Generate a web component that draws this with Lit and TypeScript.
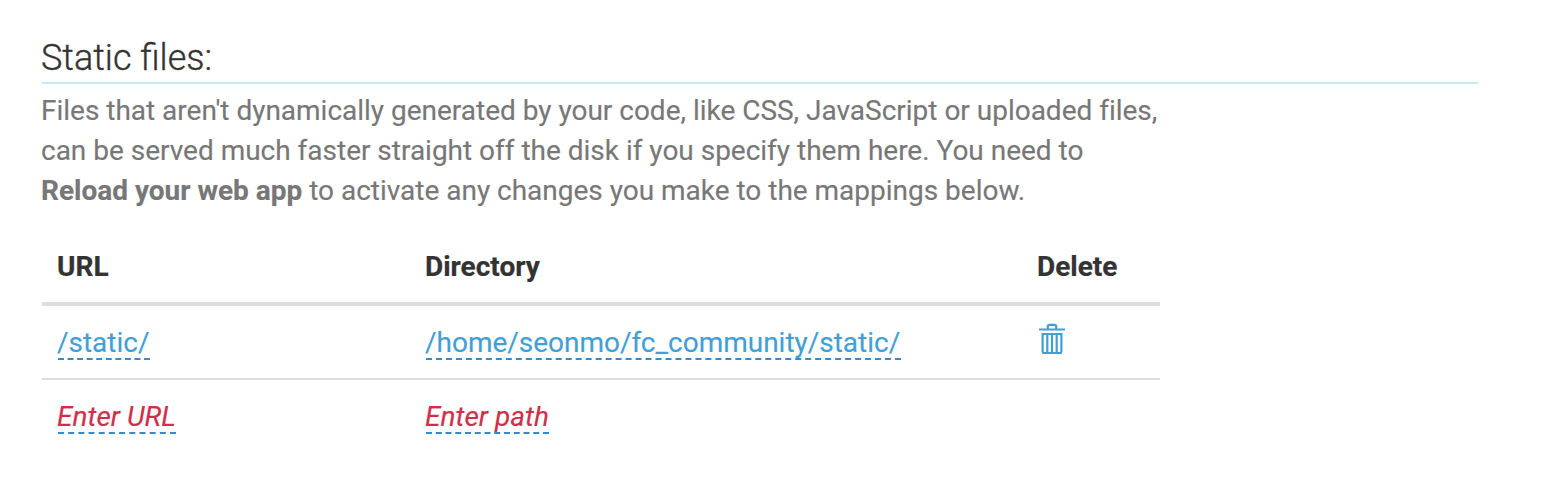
import { LitElement, html, css } from "lit";
import { customElement } from "lit/decorators.js";

@customElement("app-root")
export class AppRoot extends LitElement {
  static styles = css`
    :host { display: block; box-sizing: border-box; height: 480px; padding: 34px 82px 0 42px; background: #fff; color: #333; font: 28px/40px Roboto, sans-serif; overflow: hidden; }
    h2 { margin: 0; height: 48px; font-size: 36px; line-height: 48px; font-weight: 300; text-indent: -1px; border-bottom: 2px solid #c5e9fb; white-space: nowrap; -webkit-text-stroke: 0.35px; }
    p { margin: 7px 0 0 -1px; color: #777; white-space: nowrap; letter-spacing: -0.012px; -webkit-text-stroke: 0.15px; }
    table { width: 1118px; margin-top: 19px; border-collapse: separate; border-spacing: 0; table-layout: fixed; }
    th, td { text-align: left; padding: 0 16px; box-sizing: border-box; vertical-align: top; white-space: nowrap; }
    th { height: 76px; padding-top: 17px; border-bottom: 4px solid #ddd; font-weight: 700; text-indent: -1px; -webkit-text-stroke: 0.2px; }
    td { height: 74px; padding-top: 16px; }
    .saved td { border-bottom: 2px solid #ddd; }
    .url { width: 368px; }
    .dir { width: 612px; }
    a { display: inline-block; height: 36px; padding-right: 0.4px; line-height: 42px; color: #429fd6; text-indent: -1px; letter-spacing: -0.02px; text-decoration: none; border-bottom: 2px dashed #368ac9; -webkit-text-stroke: 0.15px; }
    .empty { color: #d02e4b; letter-spacing: 0.02px; font-style: italic; }
    svg { display: block; margin-left: 1px; }
  `;
  render() {
    return html`
      <h2>Static files:</h2>
      <p>Files that aren't dynamically generated by your code, like CSS, JavaScript or uploaded files,<br>can be served much faster straight off the disk if you specify them here. You need to<br><b>Reload your web app</b> to activate any changes you make to the mappings below.</p>
      <table>
        <thead><tr><th class="url">URL</th><th class="dir">Directory</th><th>Delete</th></tr></thead>
        <tbody>
          <tr class="saved"><td><a>/static/</a></td><td><a>/home/seonmo/fc_community/static/</a></td>
            <td><svg width="28" height="34" viewBox="0 0 28 34" fill="none" stroke="#429fd6" stroke-width="2.2"><path d="M0 7.5h26M8.8 7V4.5Q8.8 2.8 10.5 2.8h5Q17.2 2.8 17.2 4.5V7M3.6 12h18.8v17.2Q22.4 31 20.6 31H5.4Q3.6 31 3.6 29.2zM8.3 12v19M13 12v19M17.7 12v19"/></svg></td></tr>
          <tr><td><a class="empty">Enter URL</a></td><td><a class="empty">Enter path</a></td><td></td></tr>
        </tbody>
      </table>`;
  }
}
